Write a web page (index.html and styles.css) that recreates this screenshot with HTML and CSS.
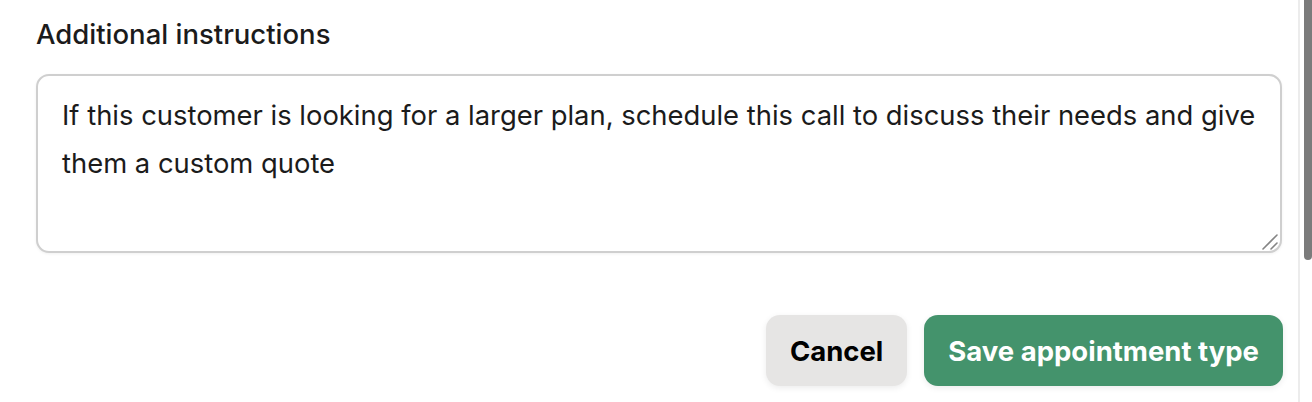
FILE: index.html
```html
<!DOCTYPE html>
<html lang="en">

<head>
  <meta charset="UTF-8" />
  <title>Appointment type</title>
  <link rel="stylesheet" href="styles.css">
</head>

<body>

  <div class="page">
    <div class="content">
      <label class="field-label" for="instructions">Additional instructions</label>
      <div class="field-box">
        <textarea id="instructions" class="field-input">If this customer is looking for a larger plan, schedule this call to discuss their needs and give them a custom quote</textarea>
        <!-- resize grip -->
        <svg class="grip" width="18" height="18" viewBox="0 0 18 18">
          <path d="M2 16 L16 2 M10 16 L16 10" stroke="#858585" stroke-width="1.6" stroke-linecap="round" fill="none" />
        </svg>
      </div>

      <div class="actions">
        <button class="btn btn-cancel">Cancel</button>
        <button class="btn btn-save">Save appointment type</button>
      </div>
    </div>

    <!-- scrollbar of the panel -->
    <div class="scrollbar">
      <div class="scrollbar-thumb"></div>
    </div>
  </div>

</body>
</html>
```

FILE: styles.css
```css
:root {
  --text: #1b1b1b;
  --border: #cfcfcf;
  --green: #44936c;
  --grey-btn: #e6e5e4;
}

* {
  margin: 0;
  padding: 0;
  box-sizing: border-box;
  font-family: Inter, 'Noto Sans', sans-serif;
}

body {
  background: #ffffff;
  color: var(--text);
  height: 402px;
  overflow: hidden;
}

.page {
  display: flex;
  height: 100%;
}

.content {
  flex-grow: 1;
  padding: 17px 15px 0 36px;
  display: flex;
  flex-direction: column;
}

.field-label {
  font-size: 27.5px;
  font-weight: 500;
  line-height: 34px;
  margin-bottom: 23px;
}

.field-box {
  position: relative;
  margin-right: 1px;
}

.field-input {
  display: block;
  width: 100%;
  height: 179px;
  padding: 15px 16px 15px 24px;
  border: 2px solid var(--border);
  border-radius: 13px;
  font-size: 27.4px;
  line-height: 48px;
  color: var(--text);
  resize: none;
  outline: none;
  box-shadow: 0 1px 3px rgba(0, 0, 0, 0.06);
}

.grip {
  position: absolute;
  right: 3px;
  bottom: 2px;
}

.actions {
  display: flex;
  justify-content: flex-end;
  gap: 17px;
  margin-top: 62px;
}

.btn {
  height: 71px;
  padding: 0 24px;
  border: none;
  border-radius: 14px;
  font-size: 27.5px;
  font-weight: 700;
  box-shadow: 0 2px 6px rgba(0, 0, 0, 0.08);
  cursor: pointer;
}

.btn-cancel {
  background: var(--grey-btn);
  color: #000000;
}

.btn-save {
  background: var(--green);
  color: #ffffff;
}

.scrollbar {
  width: 14px;
  border-left: 2px solid #ececec;
  padding-left: 4px;
}

.scrollbar-thumb {
  height: 260px;
  background: #7b7b7b;
  border-radius: 0 0 4px 4px;
}
```
